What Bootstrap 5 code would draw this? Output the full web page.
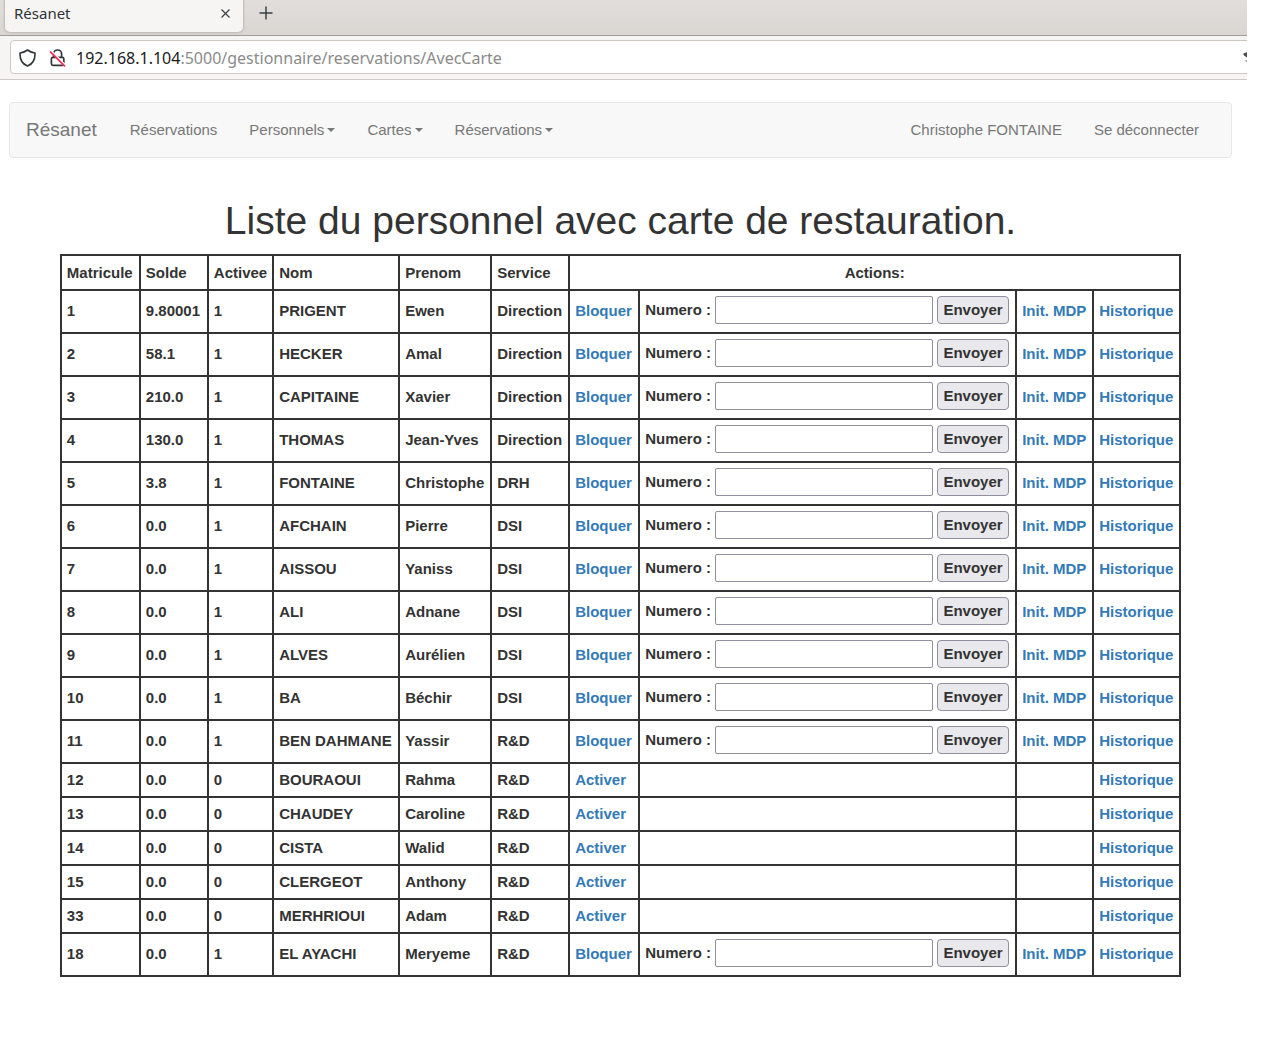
<!DOCTYPE html>
<html lang="fr">
<head>
<meta charset="utf-8">
<meta name="viewport" content="width=device-width, initial-scale=1">
<title>Résanet</title>
<link href="https://cdn.jsdelivr.net/npm/bootstrap@5.3.0/dist/css/bootstrap.min.css" rel="stylesheet">
<style>
body { font-family: "Liberation Sans", Arial, sans-serif; font-size: 15px; line-height: 22px; color: #333; background: #fff; }
a { color: #337ab7; text-decoration: none; }
a:hover { text-decoration: underline; }

/* browser frame */
.browser-frame { margin-right: 15px; font-family: "Noto Sans", sans-serif; overflow: hidden; }
.tab-strip { height: 36px; padding-left: 5px; background: linear-gradient(#e1dedb, #dad6d2); border-bottom: 1px solid #a19c98; }
.page-tab { width: 238px; height: 32px; padding: 0 12px 6px 9px; background: #f6f5f4; color: #2e3436; border-radius: 0 0 5px 5px; box-shadow: 0 0 2px 1px #bdb8b3; }
.tab-tool { padding: 0; border: 0; background: none; color: #3b4042; line-height: 0; }
.tab-new { margin: 0 0 9px 16px; }
.tool-bar { height: 44px; padding: 4px 0 5px 10px; background: #f6f5f4; border-bottom: 1px solid #cfcac6; }
.url-bar { margin-right: -12px; padding: 1px 8px 0; gap: 13px; background: #fff; border: 1px solid #cdc7c2; border-radius: 4px; font-size: 16px; color: #8b8b8b; }
.url-text { margin-left: -3px; }
.url-host { color: #1a1a1a; }

/* application page */
.app-page { padding: 22px 30px 30px 9px; }
.app-nav { padding: 0 16px 0 0; background: #f8f8f8; border: 1px solid #e7e7e7; border-radius: 4px; }
.app-nav .navbar-brand { margin: 0; padding: 0 17px 0 16px; font-size: 19px; color: #777; }
.app-nav .navbar-nav .nav-link { padding: 16px; line-height: 22px; color: #777; }
.app-nav .dropdown-toggle::after { margin-left: 3px; vertical-align: 3px; border-top: 4px solid; border-right: 4px solid transparent; border-left: 4px solid transparent; }
.page-title { margin: 41px 0 11px; font-size: 39px; line-height: 44px; font-weight: 400; }

/* staff list */
.staff { border-collapse: collapse; font-weight: 700; white-space: nowrap; }
.staff th, .staff td { height: 34px; padding: 0 5px; border: 2px solid #333; }
.staff thead th { height: 35px; }
.staff .with-card td { height: 43px; padding-bottom: 2px; }
.card-form { gap: 4px; margin-bottom: 2px; }
.card-form input { width: 218px; height: 28px; padding: 1px 4px; border: 1px solid #8f8f9d; border-radius: 2px; }
.card-form button { width: 72px; height: 28px; padding: 0; border: 1px solid #8f8f9d; border-radius: 4px; background: #e9e9ed; color: #333; font-weight: 700; }
</style>
<script src="https://cdn.jsdelivr.net/npm/bootstrap@5.3.0/dist/js/bootstrap.bundle.min.js"></script>
</head>
<body>
<header class="browser-frame">
  <div class="tab-strip d-flex align-items-start">
    <div class="page-tab d-flex align-items-center justify-content-between">
      <span>Résanet</span>
      <button class="tab-tool" type="button" aria-label="Fermer l'onglet"><svg width="11" height="11" viewBox="0 0 11 11" fill="none" stroke="currentColor" stroke-width="1.2"><path d="M1.5 1.5l8 8M9.500 1.500l-8 8"/></svg></button>
    </div>
    <button class="tab-tool tab-new align-self-end" type="button" aria-label="Nouvel onglet"><svg width="14" height="26" viewBox="0 0 14 26" fill="none" stroke="currentColor" stroke-width="1.5"><path d="M7 6.500v13M.5 13h13"/></svg></button>
  </div>
  <div class="tool-bar d-flex">
    <div class="url-bar d-flex align-items-center flex-grow-1">
      <svg width="17" height="18" viewBox="0 0 17 18" fill="none" stroke="#33373a" stroke-width="1.600" stroke-linejoin="round"><path d="M8.500 1C10.800 2.800 13.200 3.600 16 4c.2 5.600-1.600 10.800-7.500 13C2.600 14.800.8 9.600 1 4 3.800 3.600 6.200 2.800 8.500 1z"/></svg>
      <svg width="17" height="18" viewBox="0 0 17 18" fill="none"><path d="M4.600 8V5a4 4 0 0 1 8 0v3" stroke="#33373a" stroke-width="1.700"/><rect x="2.400" y="8.300" width="12.400" height="8" rx="1.500" stroke="#33373a" stroke-width="1.700"/><path d="M2.200 1.800l14.500 14.500" stroke="#fff" stroke-width="1.500"/><path d="M1 2.300l15 15" stroke="#f0335c" stroke-width="1.800"/></svg>
      <div class="url-text flex-grow-1" role="textbox" aria-label="Adresse"><span class="url-host">192.168.1.104</span>:5000/gestionnaire/reservations/AvecCarte</div>
      <svg width="8" height="14" viewBox="0 0 8 14" fill="#4a4d4f"><path d="M1.500 2.500Q4 1 8 1v6H6L3.500 5.500 1.500 4z"/><path d="M3 9h4v2H4z" opacity=".5"/></svg>
    </div>
  </div>
</header>

<main class="app-page">
  <nav class="app-nav navbar navbar-expand">
    <a class="navbar-brand" href="#">Résanet</a>
    <ul class="navbar-nav me-auto">
      <li class="nav-item"><a class="nav-link" href="#">Réservations</a></li>
      <li class="nav-item dropdown"><a class="nav-link dropdown-toggle" href="#" role="button">Personnels</a></li>
      <li class="nav-item dropdown"><a class="nav-link dropdown-toggle" href="#" role="button">Cartes</a></li>
      <li class="nav-item dropdown"><a class="nav-link dropdown-toggle" href="#" role="button">Réservations</a></li>
    </ul>
    <ul class="navbar-nav">
      <li class="nav-item"><a class="nav-link" href="#">Christophe FONTAINE</a></li>
      <li class="nav-item"><a class="nav-link" href="#">Se déconnecter</a></li>
    </ul>
  </nav>

  <h1 class="page-title text-center">Liste du personnel avec carte de restauration.</h1>

  <table class="staff mx-auto">
    <colgroup><col width="79"><col width="68"><col width="65"><col width="126"><col width="92"><col width="78"><col width="70"><col width="377"><col width="77"><col width="87"></colgroup>
    <thead>
      <tr><th>Matricule</th><th>Solde</th><th>Activee</th><th>Nom</th><th>Prenom</th><th>Service</th><th class="text-center" colspan="4">Actions:</th></tr>
    </thead>
    <tbody id="staffRows"></tbody>
  </table>
</main>

<script>
const staff = [
  [1, "9.80001", 1, "PRIGENT", "Ewen", "Direction"],
  [2, "58.1", 1, "HECKER", "Amal", "Direction"],
  [3, "210.0", 1, "CAPITAINE", "Xavier", "Direction"],
  [4, "130.0", 1, "THOMAS", "Jean-Yves", "Direction"],
  [5, "3.8", 1, "FONTAINE", "Christophe", "DRH"],
  [6, "0.0", 1, "AFCHAIN", "Pierre", "DSI"],
  [7, "0.0", 1, "AISSOU", "Yaniss", "DSI"],
  [8, "0.0", 1, "ALI", "Adnane", "DSI"],
  [9, "0.0", 1, "ALVES", "Aurélien", "DSI"],
  [10, "0.0", 1, "BA", "Béchir", "DSI"],
  [11, "0.0", 1, "BEN DAHMANE", "Yassir", "R&amp;D"],
  [12, "0.0", 0, "BOURAOUI", "Rahma", "R&amp;D"],
  [13, "0.0", 0, "CHAUDEY", "Caroline", "R&amp;D"],
  [14, "0.0", 0, "CISTA", "Walid", "R&amp;D"],
  [15, "0.0", 0, "CLERGEOT", "Anthony", "R&amp;D"],
  [33, "0.0", 0, "MERHRIOUI", "Adam", "R&amp;D"],
  [18, "0.0", 1, "EL AYACHI", "Meryeme", "R&amp;D"]
];
document.getElementById("staffRows").innerHTML = staff.map(person => {
  const [id, , active] = person;
  const form = `<form class="card-form d-flex align-items-center"><label for="numero${id}">Numero :</label><input type="text" id="numero${id}" name="numero"><button type="submit">Envoyer</button></form>`;
  return `<tr class="${active ? "with-card" : ""}">`
    + person.map(value => `<td>${value}</td>`).join("")
    + `<td><a href="#">${active ? "Bloquer" : "Activer"}</a></td>`
    + `<td>${active ? form : ""}</td>`
    + `<td>${active ? '<a href="#">Init. MDP</a>' : ""}</td>`
    + `<td><a href="#">Historique</a></td></tr>`;
}).join("");
</script>
</body>
</html>
